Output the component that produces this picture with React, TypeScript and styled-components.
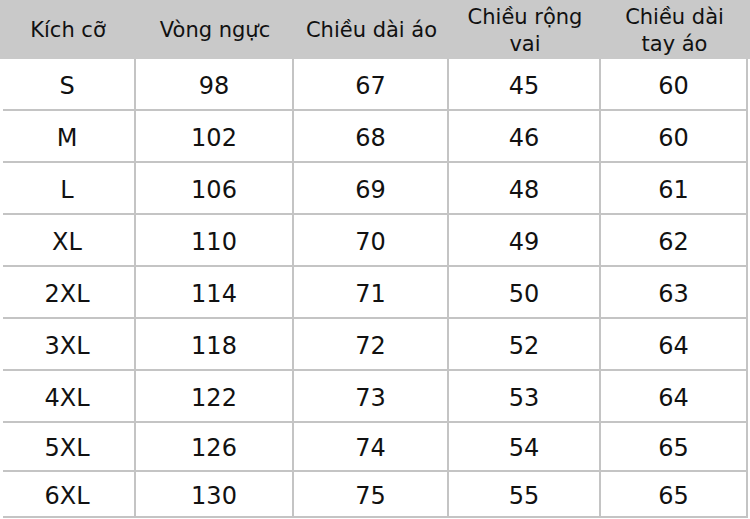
import styled, { createGlobalStyle } from 'styled-components';

const GlobalStyle = createGlobalStyle`
  html, body {
    margin: 0;
    padding: 0;
    background: #ffffff;
  }
  * {
    box-sizing: border-box;
  }
`;

const COLS = [136, 158, 155, 152, 147];

const headers = [
  ['Kích cỡ'],
  ['Vòng ngực'],
  ['Chiều dài áo'],
  ['Chiều rộng', 'vai'],
  ['Chiều dài', 'tay áo'],
];

const rows = [
  { h: 52, cells: ['S', '98', '67', '45', '60'] },
  { h: 52, cells: ['M', '102', '68', '46', '60'] },
  { h: 52, cells: ['L', '106', '69', '48', '61'] },
  { h: 52, cells: ['XL', '110', '70', '49', '62'] },
  { h: 52, cells: ['2XL', '114', '71', '50', '63'] },
  { h: 52, cells: ['3XL', '118', '72', '52', '64'] },
  { h: 52, cells: ['4XL', '122', '73', '53', '64'] },
  { h: 49, cells: ['5XL', '126', '74', '54', '65'] },
  { h: 46, cells: ['6XL', '130', '75', '55', '65'] },
];

const Table = styled.div`
  width: 750px;
  font-family: 'DejaVu Sans', Verdana, sans-serif;
  color: #111111;
`;

const HeaderRow = styled.div`
  display: grid;
  grid-template-columns: ${COLS.map((c) => `${c}px`).join(' ')} 1fr;
  height: 59px;
  background: #c9c9c9;
`;

const HeaderCell = styled.div`
  display: flex;
  flex-direction: column;
  align-items: center;
  justify-content: center;
  font-size: 21px;
  line-height: 27px;
  padding-top: 2px;
  white-space: nowrap;
`;

const BodyRow = styled.div<{ $h: number }>`
  display: grid;
  grid-template-columns: 133px ${COLS.slice(1).map((c) => `${c}px`).join(' ')};
  margin-left: 3px;
  width: 745px;
  height: ${(p) => p.$h}px;
  border-bottom: 2px solid #c4c4c4;
`;

const Cell = styled.div<{ $first?: boolean }>`
  display: flex;
  align-items: center;
  justify-content: center;
  font-size: 24px;
  padding-top: 3px;
  padding-right: ${(p) => (p.$first ? '3px' : '0')};
  border-right: 2px solid #c4c4c4;
`;

export default function App() {
  return (
    <>
      <GlobalStyle />
      <Table>
        <HeaderRow>
          {headers.map((lines, i) => (
            <HeaderCell key={i}>
              {lines.map((l) => (
                <span key={l}>{l}</span>
              ))}
            </HeaderCell>
          ))}
          <div />
        </HeaderRow>
        {rows.map((r) => (
          <BodyRow key={r.cells[0]} $h={r.h}>
            {r.cells.map((c, i) => (
              <Cell key={i} $first={i === 0}>
                {c}
              </Cell>
            ))}
          </BodyRow>
        ))}
      </Table>
    </>
  );
}
